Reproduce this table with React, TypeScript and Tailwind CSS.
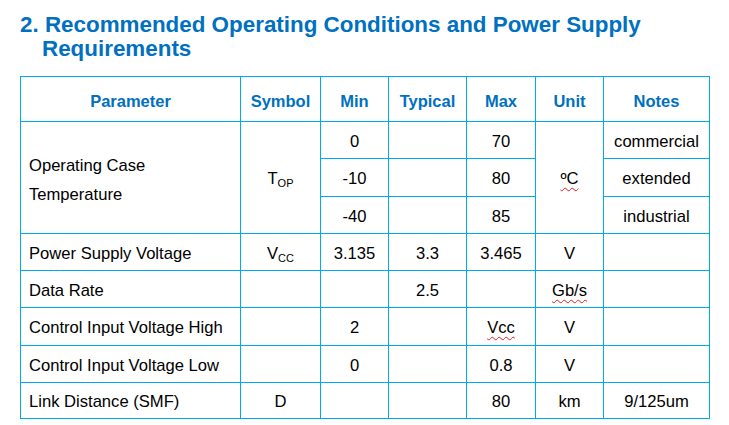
import React from 'react';

type Row = {
  param: string;
  symbol?: React.ReactNode;
  min?: string;
  typ?: string;
  max?: React.ReactNode;
  unit?: React.ReactNode;
  notes?: string;
  h: string;
};

const cell = 'border border-[#00A8EC] text-center align-middle pt-[4px]';

const Sub = ({base, sub}: {base: string; sub: string}) => (
  <span>
    {base}
    <span className="text-[11px] relative top-[3px]">{sub}</span>
  </span>
);

const Squiggle = ({children}: {children: React.ReactNode}) => (
  <span className="underline decoration-wavy decoration-[#E02020] decoration-1 underline-offset-[3px]">{children}</span>
);

const rows: Row[] = [
  {param: 'Power Supply Voltage', symbol: <Sub base="V" sub="CC" />, min: '3.135', typ: '3.3', max: '3.465', unit: 'V', h: 'h-[37px]'},
  {param: 'Data Rate', typ: '2.5', unit: <Squiggle>Gb/s</Squiggle>, h: 'h-[37px]'},
  {param: 'Control Input Voltage High', min: '2', max: <Squiggle>Vcc</Squiggle>, unit: 'V', h: 'h-[38px]'},
  {param: 'Control Input Voltage Low', min: '0', max: '0.8', unit: 'V', h: 'h-[37px]'},
  {param: 'Link Distance (SMF)', symbol: 'D', max: '80', unit: 'km', notes: '9/125um', h: 'h-[36px]'},
];

const temps = [
  {min: '0', max: '70', notes: 'commercial', h: 'h-[37px]'},
  {min: '-10', max: '80', notes: 'extended', h: 'h-[38px]'},
  {min: '-40', max: '85', notes: 'industrial', h: 'h-[37px]'},
];

export default function App() {
  return (
    <div className="w-[729px] h-[425px] bg-white overflow-hidden font-['Liberation_Sans',Arial,sans-serif]">
      <h2 className="pl-[42px] -indent-[22px] pt-[13px] text-[22.4px] leading-[24px] font-bold text-[#0070C0]">
        2. Recommended Operating Conditions and Power Supply Requirements
      </h2>

      <table className="ml-[20px] mt-[15px] w-[689px] table-fixed border-collapse text-[16.6px] text-black">
        <colgroup>
          <col className="w-[220px]" />
          <col className="w-[80px]" />
          <col className="w-[68px]" />
          <col className="w-[78px]" />
          <col className="w-[69px]" />
          <col className="w-[68px]" />
          <col className="w-[106px]" />
        </colgroup>
        <thead>
          <tr className="h-[45px] font-bold text-[#0070C0] text-[16.5px]">
            {['Parameter', 'Symbol', 'Min', 'Typical', 'Max', 'Unit', 'Notes'].map(h => (
              <th key={h} className={cell}>{h}</th>
            ))}
          </tr>
        </thead>
        <tbody>
          {temps.map((t, i) => (
            <tr key={t.min} className={t.h}>
              {i === 0 && (
                <>
                  <td rowSpan={3} className={`${cell} text-left pl-[8px] leading-[29px]`}>
                    Operating Case<br />Temperature
                  </td>
                  <td rowSpan={3} className={cell}><Sub base="T" sub="OP" /></td>
                </>
              )}
              <td className={cell}>{t.min}</td>
              <td className={cell}></td>
              <td className={cell}>{t.max}</td>
              {i === 0 && (
                <td rowSpan={3} className={cell}><Squiggle>ºC</Squiggle></td>
              )}
              <td className={cell}>{t.notes}</td>
            </tr>
          ))}
          {rows.map(r => (
            <tr key={r.param} className={r.h}>
              <td className={`${cell} text-left pl-[8px]`}>{r.param}</td>
              <td className={cell}>{r.symbol}</td>
              <td className={cell}>{r.min}</td>
              <td className={cell}>{r.typ}</td>
              <td className={cell}>{r.max}</td>
              <td className={cell}>{r.unit}</td>
              <td className={cell}>{r.notes}</td>
            </tr>
          ))}
        </tbody>
      </table>
    </div>
  );
}
